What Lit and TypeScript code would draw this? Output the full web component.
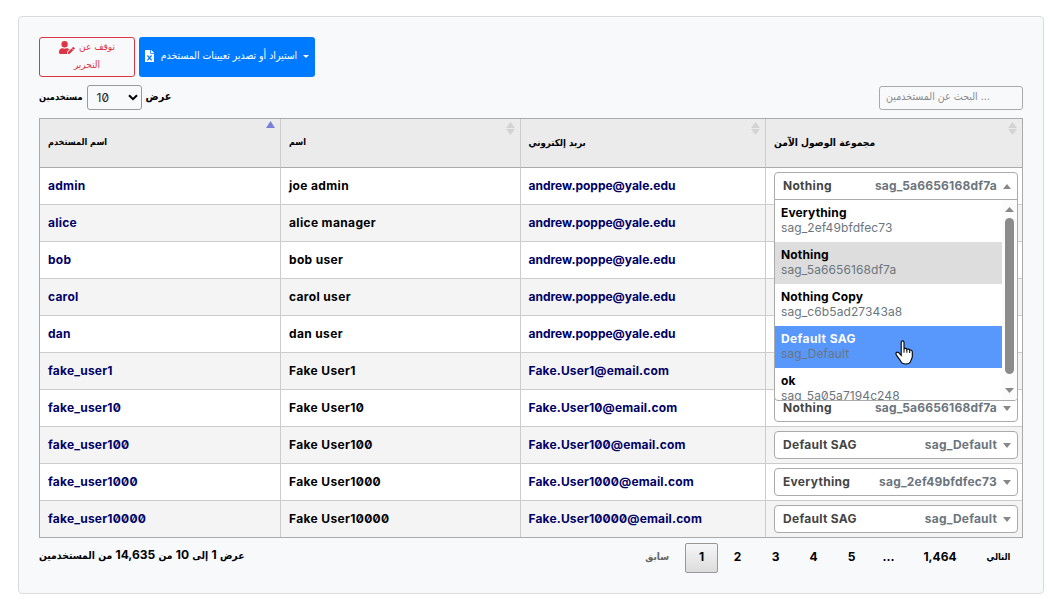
import { LitElement, html, css, svg } from "lit";
import { customElement } from "lit/decorators.js";
import { classMap } from "lit/directives/class-map.js";

const G: Record<string, string> = {
  Nothing: "sag_5a6656168df7a",
  "Default SAG": "sag_Default",
  Everything: "sag_2ef49bfdfec73",
};

const ROWS = [
  ["admin", "joe admin", "andrew.poppe@yale.edu", "Nothing"],
  ["alice", "alice manager", "andrew.poppe@yale.edu", "Nothing"],
  ["bob", "bob user", "andrew.poppe@yale.edu", "Nothing"],
  ["carol", "carol user", "andrew.poppe@yale.edu", "Nothing"],
  ["dan", "dan user", "andrew.poppe@yale.edu", "Nothing"],
  ["fake_user1", "Fake User1", "Fake.User1@email.com", "Nothing"],
  ["fake_user10", "Fake User10", "Fake.User10@email.com", "Nothing"],
  ["fake_user100", "Fake User100", "Fake.User100@email.com", "Default SAG"],
  ["fake_user1000", "Fake User1000", "Fake.User1000@email.com", "Everything"],
  ["fake_user10000", "Fake User10000", "Fake.User10000@email.com", "Default SAG"],
];

const OPTIONS = [
  ["Everything", "sag_2ef49bfdfec73"],
  ["Nothing", "sag_5a6656168df7a"],
  ["Nothing Copy", "sag_c6b5ad27343a8"],
  ["Default SAG", "sag_Default"],
  ["ok", "sag_5a05a7194c248"],
];

const tri = (up: boolean, w = 8, h = 5) => html`<svg class="tri" width=${w} height=${h} viewBox="0 0 8 5" preserveAspectRatio="none">
  ${up ? svg`<path d="M0 5 4 0 8 5z"/>` : svg`<path d="M0 0 4 5 8 0z"/>`}
</svg>`;

@customElement("sag-select")
export class SagSelect extends LitElement {
  static properties = { name: {}, open: { type: Boolean } };
  declare name: string;
  declare open: boolean;

  static styles = css`
    :host { display: block; position: relative; width: 244px; }
    .box {
      box-sizing: border-box; height: 28px; border: 1px solid #aaa; border-radius: 4px; background: #fff;
      display: flex; align-items: center; padding: 0 6px 0 8px; font-weight: 700; color: #444;
    }
    .box.open { border-radius: 4px 4px 0 0; }
    .name, .id { padding-bottom: 2px; }
    .name { flex: 1; letter-spacing: 0.3px; }
    .id { color: #6c757d; margin-right: 6px; letter-spacing: 0.2px; }
    .tri { display: block; fill: #888; }
    .menu {
      position: absolute; z-index: 2; top: 27px; left: 0; width: 244px; height: 202px; box-sizing: border-box;
      border: 1px solid #aaa; border-radius: 0 0 4px 4px; background: #fff; overflow: hidden; display: flex;
    }
    .list { width: 227px; flex: none; }
    .opt { height: 42px; box-sizing: border-box; padding: 5px 6px 0; line-height: 15px; color: #000; }
    .opt b { display: block; font-weight: 700; letter-spacing: 0.15px; }
    .opt span { display: block; color: #6c757d; font-weight: 400; letter-spacing: 0.1px; }
    .opt.sel { background: #ddd; }
    .opt.hot { background: #5897fb; }
    .opt.hot b { color: #fff; letter-spacing: 0.4px; }
    .bar { width: 15px; background: #fcfcfc; display: flex; flex-direction: column; align-items: center; padding: 7px 0 7px; box-sizing: border-box; }
    .thumb { width: 9px; height: 156px; border-radius: 5px; background: #8b8b8b; margin: 6px 0 auto; }
    .hand { position: absolute; z-index: 3; left: 121px; top: 168px; }
  `;

  render() {
    return html`
      <div class=${classMap({ box: true, open: this.open })}>
        <span class="name">${this.name}</span><span class="id">${G[this.name]}</span>${tri(!!this.open)}
      </div>
      ${this.open ? html`
        <div class="menu">
          <div class="list">
            ${OPTIONS.map(([n, id], i) => html`<div class=${classMap({ opt: true, sel: i === 1, hot: i === 3 })}><b>${n}</b><span>${id}</span></div>`)}
          </div>
          <div class="bar">${tri(true, 9, 5)}<div class="thumb"></div>${tri(false, 9, 5)}</div>
        </div>
        <svg class="hand" width="19" height="25" viewBox="0 0 19 25">
          <path d="M6.2 2.2C6.2.4 9 .4 9 2.2V9c.3-1 2.7-.9 2.9.6.5-.9 2.5-.7 2.8.8.7-.7 2.6-.3 2.6 1.5v4.600c0 2-1.500 3.500-1.900 5.200-.5 1.600-2.400 2.300-4.600 2.300-2.400 0-4.200-.7-5-2.600-.6-1.500-2.300-3.300-3.700-5.300-1.400-1.800-1.600-2.900-.7-3.600.9-.7 2.300-.1 3.400 1.300l1.400 1.500z" fill="#fff" stroke="#000" stroke-width="1.100"/>
          <path d="M9 9v3.700M11.900 10v2.700M14.700 11v2" fill="none" stroke="#000"/>
        </svg>` : ""}
    `;
  }
}

@customElement("app-root")
export class AppRoot extends LitElement {
  static styles = css`
    :host {
      display: block; box-sizing: border-box; height: 611px; padding: 16px 18px 0; background: #fff;
      font: 12px Inter, "DejaVu Sans", sans-serif; font-feature-settings: "zero"; color: #000;
    }
    .card { box-sizing: border-box; width: 1026px; height: 578px; border: 1px solid #d9dbdd; border-radius: 4px; background: #f8f9fb; padding: 20px; }
    .ar { font-family: "DejaVu Sans Condensed", "DejaVu Sans", sans-serif; font-size: 10px; direction: rtl; white-space: nowrap; letter-spacing: 0; }
    .t1 { padding-bottom: 2px; }
    .t2 { font-size: 10.4px; padding-bottom: 3px; }
    .t3 { font-size: 9.2px; }
    .t4 { font-size: 10.8px; }
    .t5 { font-size: 10.6px; padding-bottom: 3px; }
    .t3, .t4 { padding-bottom: 2px; }
    .h0 { font-size: 9px; }
    .h1 { font-size: 9px; }
    .h2 { font-size: 9.6px; }
    .h3 { font-size: 10.2px; }
    .head .ar { padding-bottom: 2px; }
    .buttons { display: flex; gap: 4px; height: 40px; }
    .btn { box-sizing: border-box; border-radius: 3px; height: 40px; display: flex; align-items: center; justify-content: center; }
    .red { width: 96px; border: 1px solid #dc3545; color: #dc3545; flex-direction: column; padding-bottom: 3px; }
    .line { display: flex; align-items: center; gap: 4px; height: 17px; }
    .blue { width: 176px; background: #007bff; color: #fff; gap: 7px; padding-bottom: 2px; }
    .caret { width: 6px; height: 3px; fill: #fff; margin-left: -1px; }
    .tools { display: flex; justify-content: space-between; align-items: center; height: 25px; margin-top: 8px; }
    .length { display: flex; align-items: center; gap: 4px; font-weight: 700; }
    .num { box-sizing: border-box; width: 55px; height: 25px; border: 1px solid #999; border-radius: 3px; display: flex; align-items: center; justify-content: space-between; padding: 0 3px 0 9px; font-weight: 400; color: #222; }
    .search { box-sizing: border-box; width: 144px; height: 24px; border: 1px solid #aaa; border-radius: 3px; display: flex; align-items: center; padding: 0 6px; color: #8a8a8a; }
    .search .ar { direction: ltr; }
    .table { border: 1px solid #aaa; margin-top: 8px; box-sizing: border-box; height: 420px; font-weight: 700; }
    .row { display: grid; grid-template-columns: 241px 240px 245px 256px; height: 37px; background: #fff; }
    .row.alt { background: #f4f4f4; }
    .row.head { height: 49px; background: #ebebeb; }
    .cell { box-sizing: border-box; border-right: 1px solid #ccc; border-bottom: 1px solid #ccc; padding-left: 8px; display: flex; align-items: center; position: relative; }
    .text { padding-bottom: 2px; }
    .cell:nth-child(3) { padding-left: 7.5px; }
    .cell:last-child { border-right: 0; }
    .row:last-child { height: 36px; }
    .row:last-child .cell { border-bottom: 0; }
    .head .cell { border-bottom-color: #aaa; }
    .link { color: #000066; }
    .user { letter-spacing: 0.23px; }
    .full { letter-spacing: 0.35px; }
    .wide { letter-spacing: 0.15px; }
    .sort { position: absolute; right: 5px; top: 3px; display: flex; flex-direction: column; gap: 1px; fill: #d3d3d3; }
    .sort.on { fill: #7a7fdb; top: 2px; }
    .sort svg { display: block; }
    .foot { display: flex; justify-content: space-between; font-weight: 700; margin-top: 5px; }
    .info { padding-top: 4px; height: 18px; line-height: 17px; font-size: 10.3px; }
    .info b { font: 700 12px Inter; }
    .pages { display: flex; align-items: center; height: 30px; margin-right: 1px; }
    .p { box-sizing: border-box; height: 30px; display: flex; align-items: center; justify-content: center; padding: 0 0 4px; margin-left: 5px; }
    .prev { padding-right: 12px; }
    .cur { width: 33px; border: 1px solid #979797; border-radius: 2px; background: linear-gradient(#f5f6f8, #dcdcdc); margin-left: 4px; }
    .n { width: 33px; }
    .cur + .n { margin-left: 3px; }
    .dots { margin-left: 4px; }
    .last { width: 60px; }
    .next { width: 47px; }
    .next .ar { font-size: 9.2px; }
    .off { color: #666; }
  `;

  sortIcon(on: boolean) {
    return on
      ? html`<div class="sort on">${tri(true, 9, 7)}</div>`
      : html`<div class="sort">${tri(true, 9, 6)}${tri(false, 9, 6)}</div>`;
  }

  render() {
    const heads = ["اسم المستخدم", "اسم", "بريد إلكتروني", "مجموعة الوصول الآمن"];
    return html`
      <div class="card">
        <div class="buttons">
          <div class="btn red">
            <div class="line">
              <svg width="16" height="13" viewBox="0 0 640 512" fill="currentColor"><path d="M224 256a128 128 0 1 0 0-256 128 128 0 1 0 0 256zm89.600 32h-16.700a174 174 0 0 1-145.800 0h-16.700C60.200 288 0 348.200 0 422.400V464c0 26.500 21.500 48 48 48h274.900a48 48 0 0 1-2.400-21.200l6.800-60.900 1.200-11.100 7.900-7.900 77.300-77.300c-24.500-27.700-60-45.500-99.900-45.600zm45.300 145.300-6.800 61c-1.100 10.200 7.500 18.800 17.600 17.600l60.900-6.800 137.900-137.900-71.700-71.700zm271.500-145.300-38-38a32 32 0 0 0-45 0l-37.900 37.900 71.800 71.700 49.100-49c6-6 6-16 0-22.600z"/></svg>
              <span class="ar t1">توقف عن</span>
            </div>
            <div class="line"><span class="ar">التحرير</span></div>
          </div>
          <div class="btn blue">
            <svg width="9" height="12" viewBox="0 0 384 512"><path fill="#fff" d="M224 136V0H24C10.700 0 0 10.700 0 24v464c0 13.300 10.700 24 24 24h336c13.300 0 24-10.700 24-24V160H248c-13.200 0-24-10.800-24-24zM384 122v6H256V0h6a24 24 0 0 1 17 7l98 98a24 24 0 0 1 7 17z"/><path d="M105 235 279 440M279 235 105 440" stroke="#007bff" stroke-width="54"/></svg>
            <span class="ar t2">استيراد أو تصدير تعيينات المستخدم</span>
            <svg class="caret" viewBox="0 0 6 3"><path d="M0 0h6L3 3z"/></svg>
          </div>
        </div>
        <div class="tools">
          <div class="length">
            <span class="ar t3">مستخدمين</span>
            <div class="num">10<svg width="10" height="7" viewBox="0 0 10 7"><path d="M1 1.200 5 5.200 9 1.200" fill="none" stroke="#000" stroke-width="2"/></svg></div>
            <span class="ar t4">عرض</span>
          </div>
          <div class="search"><span class="ar t5">البحث عن المستخدمين ...</span></div>
        </div>
        <div class="table">
          <div class="row head">
            ${heads.map((h, i) => html`<div class="cell"><span class="ar h${i}">${h}</span>${this.sortIcon(i === 0)}</div>`)}
          </div>
          ${ROWS.map(([u, n, e, g], i) => html`
            <div class=${classMap({ row: true, alt: i % 2 === 1 })}>
              <div class="cell text link user">${u}</div>
              <div class="cell text full">${n}</div>
              <div class=${classMap({ cell: true, text: true, link: true, wide: i > 4 })}>${e}</div>
              <div class="cell"><sag-select .name=${g} .open=${i === 0}></sag-select></div>
            </div>`)}
        </div>
        <div class="foot">
          <div class="ar info">عرض <b>1</b> إلى <b>10</b> من <b>14,635</b> من المستخدمين</div>
          <div class="pages">
            <div class="p off prev"><span class="ar">سابق</span></div>
            <div class="p cur">1</div>
            ${["2", "3", "4", "5"].map((x) => html`<div class="p n">${x}</div>`)}
            <div class="p n dots">...</div>
            <div class="p last">1,464</div>
            <div class="p next"><span class="ar">التالي</span></div>
          </div>
        </div>
      </div>`;
  }
}
